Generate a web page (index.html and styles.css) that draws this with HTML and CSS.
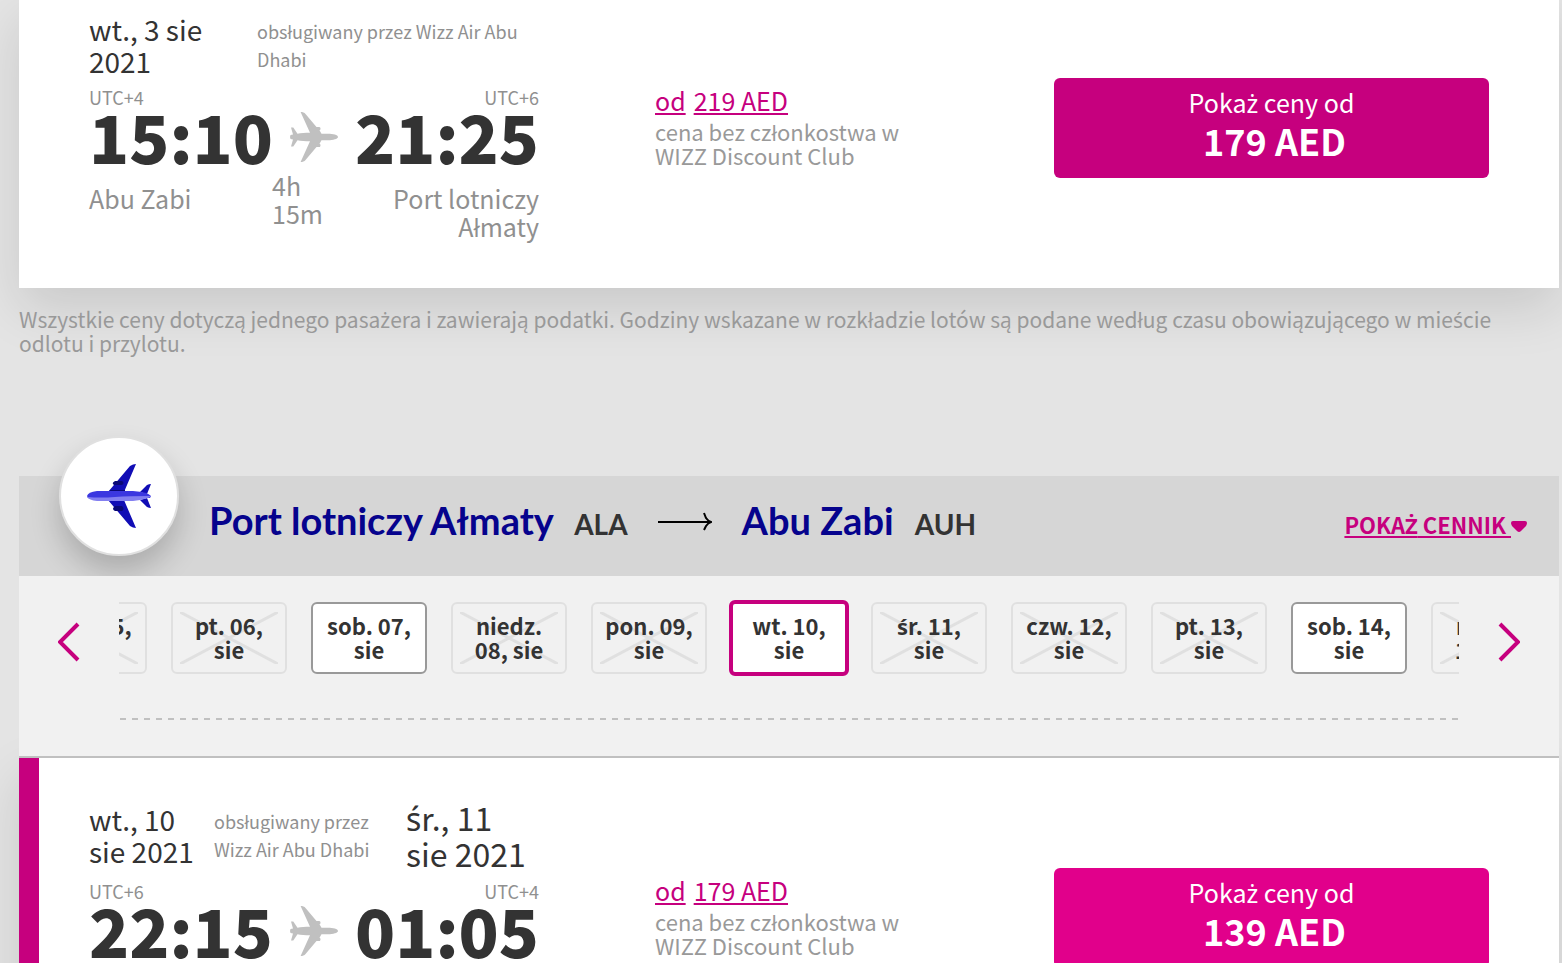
FILE: index.html
```html
<!DOCTYPE html>
<html lang="pl">
<head>
  <meta charset="UTF-8">
  <meta name="viewport" content="width=device-width, initial-scale=1.0">
  <title>Wybierz lot</title>
  <link rel="stylesheet" href="styles.css">
</head>
<body>
  <svg class="symbols" aria-hidden="true">
    <symbol id="plane" viewBox="0 0 48 50">
      <path d="M48 25c0 2-5 3.200-10 3.200h-6.500l-2 3.500c.7.1 1 .6 1 1.500 0 1.300-.4 1.700-1.300 1.900h-2.700L15.500 48c-1 1.600-3 2-4.900 2L20 29.200c-4.500 0-9.500-.4-12.500-1L3.300 34.500H1l2-7L.5 27l-.5-2 .5-2L3 22.500 1 15.500h2.300l4.200 6.300c3-.6 8-1 12.500-1L10.600 0c1.900 0 3.900.4 4.900 2l11 12.900h2.700c.9.200 1.300.6 1.300 1.900 0 .9-.3 1.400-1 1.500l2 3.500H38c5 0 10 1.200 10 3.200z"/>
    </symbol>
  </svg>

  <main>
    <!-- Lot wylotowy -->
    <article class="flight flight-first">
      <div class="flight-info">
        <div class="flight-dates">
          <div class="date">wt., 3 sie 2021</div>
          <div class="operator">obsługiwany przez Wizz Air Abu Dhabi</div>
        </div>
        <div class="zones"><span>UTC+4</span><span>UTC+6</span></div>
        <div class="times">
          <time>15:10</time>
          <svg class="plane"><use href="#plane"/></svg>
          <time>21:25</time>
        </div>
        <div class="places">
          <span>Abu Zabi</span>
          <span class="duration"><span>4h</span> <span>15m</span></span>
          <span class="arrival">Port lotniczy Ałmaty</span>
        </div>
      </div>
      <div class="regular-price">
        <a href="#"><span>od</span><span>219 AED</span></a>
        <p>cena bez członkostwa w WIZZ Discount Club</p>
      </div>
      <button type="button" class="price-button">Poka<span class="pl">ż</span> ceny od <strong>179 AED</strong></button>
    </article>

    <p class="note">Wszystkie ceny dotyczą jednego pasa<span class="pl">ż</span>era i zawierają podatki. Godziny wskazane w rozkładzie lotów są podane według czasu obowiązującego w mie<span class="pl">ś</span>cie odlotu i przylotu.</p>

    <!-- Lot powrotny -->
    <section class="direction">
      <header class="route">
        <div class="route-badge">
          <svg width="64" height="64" viewBox="0 0 64 64">
            <path fill="#110db5" d="M21 28 43 2q3-2 6-2L37 28zM21 36l22 26q3 2 6 2L37 36zM53 28l7-7q2-1 4-1l-4 10zM53 36l7 7q2 1 4 1l-4-10z"/>
            <path fill="#0a0876" d="M28 17h7q3 2 0 4h-8q-3-2 1-4zM28 42h7q3 3 0 5h-7q-4-2 0-5zM23 26h15v2H22zM22 36h15v1H23z"/>
            <path fill="#3b37e0" d="M0 32q1-4 10-5h36q15 1 18 5l-1 2H1z"/>
            <path fill="#837ff0" d="M0 33q14 1 28 0t36-1q-2 3-18 5H10Q2 36 0 33z"/>
          </svg>
        </div>
        <h2>Port lotniczy Ałmaty <small>ALA</small></h2>
        <svg class="route-arrow" width="54" height="20" viewBox="0 0 54 20" fill="none" stroke="#000" stroke-width="2">
          <path d="M0 10h52M46 1l2 5q2 3 5 4-3 1-5 4l-2 4"/>
        </svg>
        <h2>Abu Zabi <small>AUH</small></h2>
        <a class="fare-link" href="#"><span>POKA<span class="pl">Ż</span> CENNIK&nbsp;</span><svg width="16" height="11" viewBox="0 0 16 11"><path fill="#c6007e" d="M2 0h12q2 0 2 2 0 1-1 3l-5 5q-2 2-4 0L1 5Q0 3 0 2 0 0 2 0z"/></svg></a>
      </header>

      <div class="calendar">
        <button type="button" class="nav" aria-label="Poprzednie dni">
          <svg width="22" height="40" viewBox="0 0 22 40"><path d="M20 2 2 20l18 18"/></svg>
        </button>
        <div class="calendar-days">
          <div class="days">
            <button type="button" class="day none"><span>czw. 05, sie</span></button>
            <button type="button" class="day none"><span>pt. 06, sie</span></button>
            <button type="button" class="day"><span>sob. 07, sie</span></button>
            <button type="button" class="day none"><span>niedz. 08, sie</span></button>
            <button type="button" class="day none"><span>pon. 09, sie</span></button>
            <button type="button" class="day selected"><span>wt. 10, sie</span></button>
            <button type="button" class="day none"><span><span class="pl">ś</span>r. 11, sie</span></button>
            <button type="button" class="day none"><span>czw. 12, sie</span></button>
            <button type="button" class="day none"><span>pt. 13, sie</span></button>
            <button type="button" class="day"><span>sob. 14, sie</span></button>
            <button type="button" class="day none"><span>niedz. 15, sie</span></button>
          </div>
        </div>
        <button type="button" class="nav" aria-label="Następne dni">
          <svg width="22" height="40" viewBox="0 0 22 40"><path d="m2 2 18 18L2 38"/></svg>
        </button>
      </div>

      <article class="flight flight-active">
        <div class="flight-info">
          <div class="flight-dates next-day">
            <div class="date">wt., 10 sie 2021</div>
            <div class="operator">obsługiwany przez Wizz Air Abu Dhabi</div>
            <div class="date date-arrival"><span class="pl">ś</span>r., 11 sie 2021</div>
          </div>
          <div class="zones"><span>UTC+6</span><span>UTC+4</span></div>
          <div class="times">
            <time>22:15</time>
            <svg class="plane"><use href="#plane"/></svg>
            <time>01:05</time>
          </div>
          <div class="places">
            <span>Port lotniczy Ałmaty</span>
            <span class="duration"><span>4h</span> <span>50m</span></span>
            <span class="arrival">Abu Zabi</span>
          </div>
        </div>
        <div class="regular-price">
          <a href="#"><span>od</span><span>179 AED</span></a>
          <p>cena bez członkostwa w WIZZ Discount Club</p>
        </div>
        <button type="button" class="price-button price-button-active">Poka<span class="pl">ż</span> ceny od <strong>139 AED</strong></button>
      </article>
    </section>
  </main>
</body>
</html>
```
FILE: styles.css
```css
* {
  box-sizing: border-box;
}
html {
  overflow: hidden;
}
body {
  margin: 0;
  background-color: #e4e4e4;
  color: #333;
  font-family: "Noto Sans CJK SC", "Open Sans", sans-serif;
  font-size: 22px;
  line-height: 24px;
}
main {
  margin: 0 3px 0 19px;
}
button {
  font-family: inherit;
  cursor: pointer;
}
p, h2 {
  margin: 0;
}
.symbols {
  display: none;
}
/* letters missing from the main font */
.pl {
  font-family: "Noto Sans", "Open Sans", sans-serif;
  line-height: 1;
}

/* flight card */
.flight {
  display: grid;
  grid-template-columns: 450fr 283fr 435fr;
  column-gap: 116px;
  align-items: center;
  padding: 41px 70px 45px;
  background-color: #fff;
  box-shadow: 0 20px 50px rgba(0, 0, 0, 0.12);
}
.flight-first {
  padding-top: 13px;
}
.flight-active {
  border-left: 20px solid #c6007e;
  padding-left: 50px;
}
.flight-dates {
  display: grid;
  grid-template-columns: 168px 1fr;
  align-items: center;
}
.next-day {
  grid-template-columns: 125px 192px 1fr;
}
.date {
  padding-right: 16px;
  font-size: 28px;
  line-height: 32px;
}
.date-arrival {
  padding-right: 8px;
  font-size: 32px;
  line-height: 36px;
}
.operator {
  padding-right: 16px;
  color: #909090;
  font-size: 18px;
  line-height: 28px;
}
.zones {
  display: flex;
  justify-content: space-between;
  margin-top: 10px;
  color: #909090;
  font-size: 18px;
  line-height: 20px;
}
.times {
  display: flex;
  justify-content: space-between;
  align-items: center;
  font-size: 66px;
  font-weight: 900;
  line-height: 56px;
}
.plane {
  width: 48px;
  height: 50px;
  margin-top: 4px;
  fill: #c0c0c0;
}
.places {
  display: grid;
  grid-template-columns: 183fr 84fr 183fr;
  align-items: start;
  margin-top: 21px;
  padding-bottom: 3px;
  color: #909090;
  font-size: 25px;
  line-height: 28px;
}
.duration {
  margin-top: -13px;
}
.duration span {
  display: block;
}
.arrival {
  text-align: right;
}

.regular-price {
  padding-bottom: 5px;
  color: #999;
}
.regular-price a {
  display: flex;
  gap: 8px;
  margin-bottom: 3px;
  color: #c6007e;
  font-size: 25px;
  line-height: 32px;
}
.price-button {
  min-height: 100px;
  padding: 0 16px 16px;
  border: 0;
  border-radius: 6px;
  background-color: #c6007e;
  color: #fff;
  font-size: 25px;
  line-height: 40px;
}
.price-button strong {
  display: block;
  padding-left: 6px;
  font-size: 36px;
  line-height: 36px;
}
.price-button-active {
  background-color: #e1008b;
}

.note {
  position: relative;
  padding: 19px 16px 121px 0;
  color: #999;
  font-size: 21px;
}

/* route header */
.route {
  position: relative;
  display: flex;
  align-items: center;
  min-height: 100px;
  padding: 0 32px 8px 40px;
  background-color: #d6d6d6;
}
.route-badge {
  display: flex;
  align-items: center;
  justify-content: center;
  width: 120px;
  height: 120px;
  margin: -52px 30px 0 0;
  border: 2px solid #e0e0e0;
  border-radius: 50%;
  background-color: #fff;
  box-shadow: 0 16px 30px rgba(0, 0, 0, 0.2);
}
.route h2 {
  color: #06038d;
  font-family: Lato, sans-serif;
  font-size: 38px;
  font-weight: 700;
  line-height: 40px;
}
.route small {
  margin-left: 12px;
  color: #333;
  font-size: 28px;
}
.route-arrow {
  margin: 0 30px;
}
.fare-link {
  display: flex;
  align-items: center;
  margin-left: auto;
  padding-top: 4px;
  color: #c6007e;
  font-weight: 700;
  text-decoration: none;
}
.fare-link > span {
  text-decoration: underline;
}
.fare-link svg {
  margin-top: 4px;
}

/* date carousel */
.calendar {
  position: relative;
  z-index: 1;
  display: flex;
  align-items: flex-start;
  padding: 24px 0 36px;
  border-bottom: 2px solid #c0c0c0;
  background-color: #f1f1f1;
}
.nav {
  flex: none;
  display: flex;
  align-items: center;
  justify-content: center;
  width: 100px;
  height: 84px;
  padding: 0;
  border: 0;
  background: none;
}
.nav path {
  fill: none;
  stroke: #c6007e;
  stroke-width: 4;
}
.calendar-days {
  flex: 1;
  min-width: 0;
}
.days {
  display: flex;
  justify-content: center;
  align-items: center;
  gap: 24px;
  height: 76px;
  overflow: hidden;
}
.calendar-days::after {
  content: "";
  display: block;
  height: 2px;
  margin: 42px 1px 0;
  background: repeating-linear-gradient(to right, #c0c0c0 0 6px, transparent 6px 12px);
}
.day {
  position: relative;
  flex: none;
  width: 116px;
  height: 72px;
  padding: 0 8px 3px;
  border: 2px solid #999;
  border-radius: 6px;
  background-color: #fff;
  color: #333;
  font-size: 22px;
  font-weight: 700;
  line-height: 24px;
}
.day > span {
  position: relative;
}
.selected {
  width: 120px;
  height: 76px;
  margin: 0 -2px;
  border: 4px solid #c6007e;
}
.none {
  border-color: #e0e0e0;
  background-color: transparent;
}
.none::before {
  content: "";
  position: absolute;
  inset: 8px 7px;
  background:
    linear-gradient(to top right, transparent calc(50% - 2px), #e0e0e0 calc(50% - 1px), #e0e0e0 calc(50% + 1px), transparent calc(50% + 2px)),
    linear-gradient(to bottom right, transparent calc(50% - 2px), #e0e0e0 calc(50% - 1px), #e0e0e0 calc(50% + 1px), transparent calc(50% + 2px));
}
```
